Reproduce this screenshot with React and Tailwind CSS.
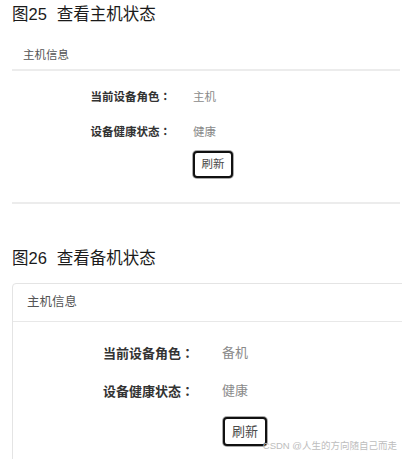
const font = { fontFamily: '"Liberation Sans", "Noto Sans CJK SC", sans-serif' };

const Row = ({ label, value, labelW, gap, h, size }) => (
  <div className={`flex items-center ${h}`}>
    <p className={`${labelW} text-right font-bold text-[#333] ${size}`}>
      {label}
      <span className='font-["Noto_Sans_CJK_TC",sans-serif]'>：</span>
    </p>
    <p className={`${gap} text-[#8a8a8a] ${size}`}>{value}</p>
  </div>
);

const App = () => {
  return (
    <div className='w-[402px] h-[459px] overflow-hidden bg-white relative pl-3' style={font}>
      {/* 图25 */}
      <h2 className='text-[16.5px] leading-[28px] text-[#1a1a1a]'>
        图25<span className='ml-[10px]'>查看主机状态</span>
      </h2>

      <div className='mt-[10px] w-[388px]'>
        <div className='h-[33px] flex items-center pt-[4px] pl-[11px] border-b-2 border-[#ececec]'>
          <p className='text-[11.5px] text-[#555]'>主机信息</p>
        </div>
        <div className='pt-[9px] pb-[24px] border-b-2 border-[#ececec]'>
          <Row label='当前设备角色' value='主机' labelW='w-[159px]' gap='ml-[22px]' h='h-[35px]' size='text-[11.5px]' />
          <Row label='设备健康状态' value='健康' labelW='w-[159px]' gap='ml-[22px]' h='h-[35px]' size='text-[11.5px]' />
          <div className='pl-[181px] mt-[1px]'>
            <button className='w-[40px] h-[27px] rounded-[4px] border-2 border-[#111] ring-1 ring-[#aaa] bg-white text-[11.5px] text-[#4a4a4a]'>
              刷新
            </button>
          </div>
        </div>
      </div>

      {/* 图26 */}
      <h2 className='mt-[40px] text-[16.5px] leading-[28px] text-[#1a1a1a]'>
        图26<span className='ml-[10px]'>查看备机状态</span>
      </h2>

      <div className='mt-[11px] w-[420px] border border-[#e4e4e4] rounded-tl-[4px]'>
        <div className='h-[38px] flex items-center pl-[14px] border-b border-[#e8e8e8]'>
          <p className='text-[12.5px] text-[#555]'>主机信息</p>
        </div>
        <div className='pt-[12px] pb-[40px]'>
          <Row label='当前设备角色' value='备机' labelW='w-[181px]' gap='ml-[28px]' h='h-[38px]' size='text-[13px]' />
          <Row label='设备健康状态' value='健康' labelW='w-[181px]' gap='ml-[28px]' h='h-[38px]' size='text-[13px]' />
          <div className='pl-[210px] mt-[7px]'>
            <button className='w-[44px] h-[29px] rounded-[4px] border-2 border-[#111] ring-1 ring-[#aaa] bg-white text-[13px] text-[#4a4a4a]'>
              刷新
            </button>
          </div>
        </div>
      </div>

      {/* watermark */}
      <p className='absolute right-[5px] top-[440px] text-[9.5px] leading-[12px] text-[#bdbdbd] whitespace-nowrap'>
        CSDN @人生的方向随自己而走
      </p>
    </div>
  );
};

export default App;
